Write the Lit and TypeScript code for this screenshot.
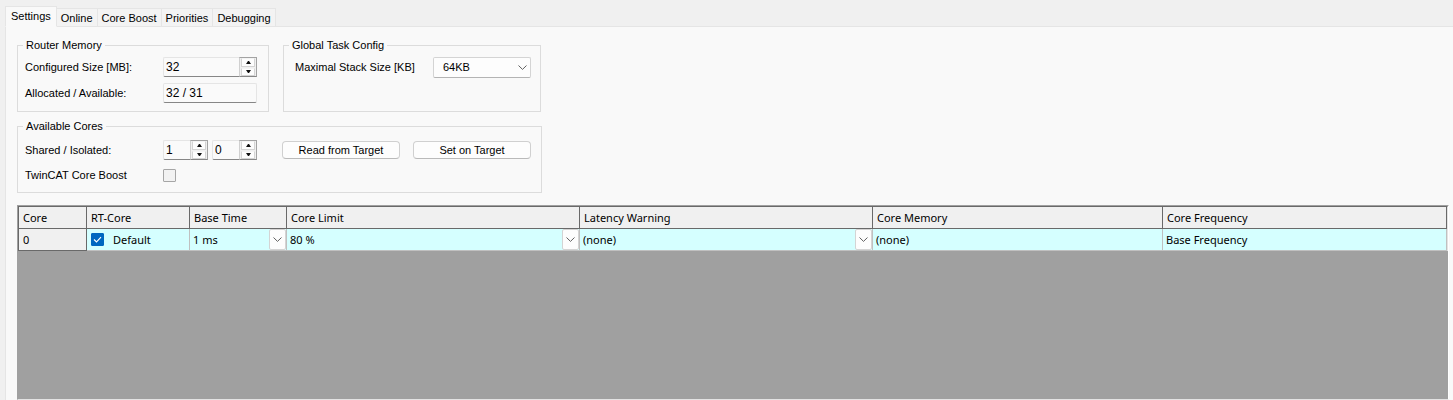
import { LitElement, html, css } from "lit";
import { customElement, property, state } from "lit/decorators.js";
import { classMap } from "lit/directives/class-map.js";

const chevron = html`<svg class="chevron" width="9" height="5" viewBox="0 0 9 5" aria-hidden="true">
  <path d="M0.5 0.5 L4.5 4.4 L8.5 0.5" fill="none" stroke="#606060" stroke-width="1" />
</svg>`;

@customElement("spin-box")
class SpinBox extends LitElement {
  @property() label = "";
  @property({ type: Number }) value = 0;

  static styles = css`
    :host {
      display: flex;
      height: 20px;
      box-sizing: border-box;
    }
    .value {
      flex: 1;
      min-width: 0;
      box-sizing: border-box;
      border: 1px solid #e5e5e5;
      border-right: 0;
      border-bottom-color: #868686;
      border-radius: 2px 0 0 2px;
      padding: 0 2px;
      background: #fafafa;
      color: #000;
      font: 12px "Liberation Sans", Arial, sans-serif;
      outline: none;
    }
    .arrows {
      display: flex;
      flex-direction: column;
      gap: 1px;
      width: 18px;
      box-sizing: border-box;
      padding: 0 1px;
      border: 1px solid #a3a3a3;
      border-bottom-color: #868686;
      border-left-color: #d0d0d0;
      background: #f0f0f0;
    }
    .arrow {
      flex: 1;
      display: flex;
      align-items: center;
      justify-content: center;
      min-height: 0;
      margin: 0;
      padding: 0;
      border: 1px solid #d4d4d4;
      border-top-color: #f4f4f4;
      background: #fdfdfd;
    }
  `;

  private step(by: number) {
    this.value = Math.max(0, this.value + by);
  }

  render() {
    return html`
      <input
        class="value"
        inputmode="numeric"
        aria-label=${this.label}
        .value=${String(this.value)}
        @change=${(e: Event) => (this.value = Number((e.target as HTMLInputElement).value) || 0)}
      />
      <span class="arrows">
        <button class="arrow" aria-label="Increase" @click=${() => this.step(1)}>
          <svg width="5" height="3" viewBox="0 0 5 3"><path d="M0 3 L2 0 H3 L5 3Z" fill="#111" /></svg>
        </button>
        <button class="arrow" aria-label="Decrease" @click=${() => this.step(-1)}>
          <svg width="5" height="3" viewBox="0 0 5 3"><path d="M0 0 L2 3 H3 L5 0Z" fill="#111" /></svg>
        </button>
      </span>
    `;
  }
}

@customElement("app-root")
class AppRoot extends LitElement {
  @state() private tab = "Settings";

  private tabs = ["Settings", "Online", "Core Boost", "Priorities", "Debugging"];

  static styles = css`
    :host {
      display: flex;
      flex-direction: column;
      min-height: 100vh;
      box-sizing: border-box;
      padding: 6px 0 0 5px;
      background: #f0f0f0;
      color: #000;
      font: 11px/14px "Liberation Sans", Arial, sans-serif;
    }
    .tabs {
      display: flex;
      align-items: flex-end;
      height: 21px;
    }
    .tab {
      height: 19px;
      box-sizing: border-box;
      margin: 0;
      padding: 1px 4px 0;
      border: 1px solid #e5e5e5;
      border-left: 0;
      background: #f3f3f3;
      color: #000;
      font: inherit;
      white-space: nowrap;
    }
    .tab.active {
      height: 21px;
      padding: 0 5px 1px;
      border-left: 1px solid #e5e5e5;
      border-bottom-color: #f9f9f9;
      background: #f9f9f9;
    }
    .rest {
      flex: 1;
      align-self: stretch;
      border-bottom: 1px solid #e5e5e5;
    }
    .panel {
      flex: 1;
      display: flex;
      flex-direction: column;
      padding: 11px 4px 0 11px;
      border-left: 1px solid #e5e5e5;
      background: #f9f9f9;
    }
    .groups {
      display: flex;
      gap: 14px;
    }
    .group {
      box-sizing: border-box;
      min-width: 0;
      margin: 0;
      padding: 0;
      border: 1px solid #dcdcdc;
    }
    .memory {
      width: 252px;
    }
    .tasks {
      width: 258px;
    }
    .cores {
      width: 525px;
      margin-top: 7px;
    }
    legend {
      height: 14px;
      margin-left: 5px;
      padding: 0 3px;
    }
    .fields {
      display: grid;
      grid-template-columns: 138px 94px;
      grid-auto-rows: 20px;
      row-gap: 6px;
      align-items: center;
      padding: 5px 7px 8px;
    }
    .fields.stack {
      grid-template-columns: 138px 98px;
      padding-left: 11px;
    }
    .row {
      display: flex;
      align-items: center;
    }
    .cores .fields {
      grid-template-columns: 138px 1fr;
      padding: 7px 10px 7px 7px;
      row-gap: 5px;
    }
    .row spin-box {
      width: 45px;
      margin-right: 4px;
    }
    .row .push {
      width: 118px;
      margin-left: 13px;
    }
    .row spin-box + .push {
      margin-left: 21px;
    }
    .field {
      height: 20px;
      box-sizing: border-box;
      width: 100%;
      padding: 0 2px;
      border: 1px solid #e5e5e5;
      border-bottom-color: #868686;
      border-radius: 2px;
      background: #fafafa;
      color: #000;
      font: inherit;
      font-size: 12px;
    }
    .push {
      height: 18px;
      box-sizing: border-box;
      padding: 0;
      border: 1px solid #d0d0d0;
      border-bottom-color: #bababa;
      border-radius: 4px;
      background: #fdfdfd;
      color: #000;
      font: inherit;
    }
    .box {
      appearance: none;
      box-sizing: border-box;
      width: 13px;
      height: 13px;
      margin: 0;
      border: 1px solid #a6a6a6;
      border-radius: 1px;
      background: #f2f2f2;
    }
    .combo {
      display: grid;
      align-items: center;
    }
    .combo select {
      grid-area: 1 / 1;
      width: 100%;
      height: 21px;
      box-sizing: border-box;
      margin: 0;
      padding: 0 20px 0 9px;
      border: 1px solid #d4d4d4;
      border-bottom-color: #b4b4b4;
      border-radius: 2px;
      appearance: none;
      background: #fdfdfd;
      color: #000;
      font: inherit;
    }
    .drop {
      grid-area: 1 / 1;
      justify-self: end;
      display: flex;
      align-items: center;
      justify-content: center;
      width: 17px;
      height: 21px;
      box-sizing: border-box;
      pointer-events: none;
    }
    .datagrid {
      flex: 1;
      margin-top: 12px;
      border: 1px solid #a0a0a0;
      border-right-color: #fff;
      border-bottom-color: #e3e3e3;
      background: #a0a0a0;
      font: 11px/16px "Noto Sans", "Open Sans", sans-serif;
    }
    .sheet {
      height: 100%;
      box-sizing: border-box;
      border: 1px solid #696969;
      border-right-color: #e3e3e3;
      border-bottom: 0;
    }
    table {
      width: 100%;
      table-layout: fixed;
      border-collapse: separate;
      border-spacing: 0;
    }
    .c-core {
      width: 68px;
    }
    .c-rt {
      width: 103px;
    }
    .c-base {
      width: 97px;
    }
    .c-wide {
      width: 293px;
    }
    .c-mem {
      width: 290px;
    }
    th,
    td {
      height: 22px;
      box-sizing: border-box;
      text-align: left;
      font-weight: 400;
      white-space: nowrap;
    }
    th {
      padding: 0 4px;
      border-right: 1px solid #696969;
      border-bottom: 1px solid #696969;
      background: #f0f0f0;
    }
    td {
      padding: 0 3px;
      border-right: 1px solid #c0c0c0;
      border-bottom: 1px solid #c0c0c0;
      background: #d5ffff;
    }
    td.pick {
      padding: 0;
    }
    .pick .combo select {
      padding: 0 20px 0 3px;
      border: 0;
      background: transparent;
    }
    .pick .drop {
      border: 1px solid #d4d4d4;
      border-radius: 2px;
      background: #fdfdfd;
    }
    .toggle {
      display: flex;
      align-items: center;
      gap: 9px;
      padding-left: 1px;
    }
    .mark {
      display: grid;
      width: 13px;
      height: 13px;
    }
    .mark input,
    .mark svg {
      grid-area: 1 / 1;
      pointer-events: none;
    }
    .mark input {
      appearance: none;
      box-sizing: border-box;
      width: 13px;
      height: 13px;
      margin: 0;
      border: 1px solid #767676;
      border-radius: 1px;
      background: #fff;
      pointer-events: auto;
    }
    .mark input:checked {
      border-color: #0067c0;
      background: #0067c0;
    }
  `;

  private cell(label: string, value: string) {
    return html`<td class="pick">
      <span class="combo">
        <select aria-label=${label}><option>${value}</option></select>
        <span class="drop">${chevron}</span>
      </span>
    </td>`;
  }

  render() {
    return html`
      <div class="tabs" role="tablist">
        ${this.tabs.map(
          (t) => html`<button
            role="tab"
            aria-selected=${t === this.tab}
            class=${classMap({ tab: true, active: t === this.tab })}
            @click=${() => (this.tab = t)}
          >${t}</button>`
        )}
        <span class="rest"></span>
      </div>
      <div class="panel" role="tabpanel">
        <div class="groups">
          <fieldset class="group memory">
            <legend>Router Memory</legend>
            <div class="fields">
              <span>Configured Size [MB]:</span>
              <spin-box label="Configured Size [MB]" value="32"></spin-box>
              <label for="alloc">Allocated / Available:</label>
              <input id="alloc" class="field" readonly .value=${"32 / 31"} />
            </div>
          </fieldset>
          <fieldset class="group tasks">
            <legend>Global Task Config</legend>
            <div class="fields stack">
              <label for="stack">Maximal Stack Size [KB]</label>
              <span class="combo">
                <select id="stack"><option>64KB</option></select>
                <span class="drop">${chevron}</span>
              </span>
            </div>
          </fieldset>
        </div>
        <fieldset class="group cores">
          <legend>Available Cores</legend>
          <div class="fields">
            <span>Shared / Isolated:</span>
            <div class="row">
              <spin-box label="Shared cores" value="1"></spin-box>
              <spin-box label="Isolated cores" value="0"></spin-box>
              <button class="push">Read from Target</button>
              <button class="push">Set on Target</button>
            </div>
            <label for="boost">TwinCAT Core Boost</label>
            <input id="boost" class="box" type="checkbox" />
          </div>
        </fieldset>
        <div class="datagrid">
          <div class="sheet">
            <table>
              <colgroup>
                <col class="c-core" /><col class="c-rt" /><col class="c-base" />
                <col class="c-wide" /><col class="c-wide" /><col class="c-mem" /><col />
              </colgroup>
              <thead>
                <tr>
                  <th>Core</th><th>RT-Core</th><th>Base Time</th><th>Core Limit</th>
                  <th>Latency Warning</th><th>Core Memory</th><th>Core Frequency</th>
                </tr>
              </thead>
              <tbody>
                <tr>
                  <th scope="row">0</th>
                  <td>
                    <label class="toggle">
                      <span class="mark">
                        <input type="checkbox" checked />
                        <svg width="13" height="13" viewBox="0 0 13 13">
                          <path d="M3 6.5 L5.5 9 L10 4.2" fill="none" stroke="#fff" stroke-width="1.1" />
                        </svg>
                      </span>
                      Default
                    </label>
                  </td>
                  ${this.cell("Base Time", "1 ms")} ${this.cell("Core Limit", "80 %")}
                  ${this.cell("Latency Warning", "(none)")}
                  <td>(none)</td>
                  <td>Base Frequency</td>
                </tr>
              </tbody>
            </table>
          </div>
        </div>
      </div>
    `;
  }
}
